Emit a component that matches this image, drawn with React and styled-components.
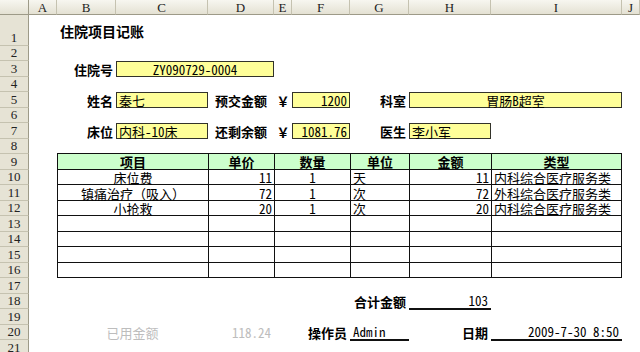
import React from 'react';
import styled, { createGlobalStyle } from 'styled-components';

const Global = createGlobalStyle`
  html, body { margin: 0; padding: 0; background: #fff; }
  body { width: 640px; height: 352px; overflow: hidden; }
`;

const COLS = ['A', 'B', 'C', 'D', 'E', 'F', 'G', 'H', 'I', 'J'];
const col = (l) => COLS.indexOf(l) + 2;
const row = (n) => n + 1;

const Sheet = styled.div`
  display: grid;
  grid-template-columns: 29px 28px 59px 92px 66px 18px 58px 59px 82px 131px 1fr;
  grid-template-rows: 15px 31px repeat(10, 15px 16px);
  width: 640px;
  height: 352px;
  overflow: hidden;
  font-family: "Noto Sans Mono CJK SC", "Noto Sans CJK SC", sans-serif;
  font-size: 13px;
  color: #000;
  background: #fff;
`;

const Corner = styled.div`
  grid-column: 1;
  grid-row: 1;
  background: linear-gradient(#f7f6f0, #e4e1d3);
  border-right: 1px solid #9d9a88;
  border-bottom: 1px solid #9d9a88;
  box-sizing: border-box;
`;

const ColHeader = styled.div`
  grid-column: ${(p) => p.$c};
  grid-row: 1;
  display: flex;
  align-items: center;
  justify-content: center;
  background: linear-gradient(#f7f6f0, #e4e1d3);
  border-right: 1px solid #c5c2b0;
  border-bottom: 1px solid #9d9a88;
  box-sizing: border-box;
  font-family: "Liberation Serif", serif;
  font-size: 13px;
  line-height: 1;
  color: #222;
`;

const RowHeader = styled.div`
  grid-column: 1;
  grid-row: ${(p) => p.$r};
  display: flex;
  align-items: flex-end;
  justify-content: center;
  background: #e6e3d5;
  border-right: 1px solid #9d9a88;
  border-bottom: 1px solid #c5c2b0;
  box-sizing: border-box;
  font-family: "Liberation Serif", serif;
  font-size: 13px;
  line-height: 14px;
  color: #222;
`;

const Cell = styled.div`
  grid-column: ${(p) => p.$c} / span ${(p) => p.$span || 1};
  grid-row: ${(p) => p.$r};
  display: flex;
  align-items: center;
  justify-content: ${(p) =>
    p.$align === 'right' ? 'flex-end' : p.$align === 'center' ? 'center' : 'flex-start'};
  padding: 0 3px;
  box-sizing: border-box;
  white-space: nowrap;
  line-height: 13px;
  min-width: 0;
`;

const Label = styled(Cell)`
  font-family: "Noto Sans CJK SC", sans-serif;
  font-weight: 700;
`;

const Title = styled(Label)`
  font-size: 14px;
  line-height: 14px;
`;

const Field = styled(Cell)`
  background: #ffff99;
  border: 1px solid #33332a;
  padding: 0 2px;
`;

const Muted = styled(Cell)`
  color: #bdbdbd;
`;

const Underlined = styled(Cell)`
  border-bottom: 2px solid #111;
  margin-bottom: -1px;
  align-items: flex-end;
  padding-bottom: 1px;
`;

const Table = styled.div`
  grid-column: ${col('B')} / span 8;
  grid-row: ${row(9)} / span 8;
  display: grid;
  grid-template-columns: 151px 66px 76px 59px 82px 130px;
  grid-template-rows: repeat(4, 16px 15px);
  border-top: 1px solid #111;
  border-left: 1px solid #111;
  box-sizing: border-box;
  margin-top: -1px;
`;

const TCell = styled.div`
  display: flex;
  align-items: ${(p) => (p.$head ? 'center' : 'flex-end')};
  justify-content: ${(p) =>
    p.$align === 'right' ? 'flex-end' : p.$align === 'center' ? 'center' : 'flex-start'};
  padding: 0 2px;
  border-right: 1px solid #111;
  border-bottom: 1px solid #111;
  background: ${(p) => (p.$head ? '#ccffcc' : '#fff')};
  font-family: ${(p) => (p.$head ? '"Noto Sans CJK SC", sans-serif' : 'inherit')};
  font-weight: ${(p) => (p.$head ? 700 : 400)};
  white-space: nowrap;
  line-height: 13px;
  box-sizing: border-box;
  min-width: 0;
`;

const headers = ['项目', '单价', '数量', '单位', '金额', '类型'];
const aligns = ['center', 'right', 'center', 'left', 'right', 'left'];
const items = [
  ['床位费', '11', '1', '天', '11', '内科综合医疗服务类'],
  ['镇痛治疗（吸入）', '72', '1', '次', '72', '外科综合医疗服务类'],
  ['小抢救', '20', '1', '次', '20', '内科综合医疗服务类'],
  ['', '', '', '', '', ''],
  ['', '', '', '', '', ''],
  ['', '', '', '', '', ''],
  ['', '', '', '', '', ''],
];

export default function App() {
  return (
    <>
      <Global />
      <Sheet>
        <Corner />
        {COLS.map((l) => (
          <ColHeader key={l} $c={col(l)}>{l}</ColHeader>
        ))}
        {Array.from({ length: 21 }, (_, i) => (
          <RowHeader key={i} $r={row(i + 1)}>{i + 1}</RowHeader>
        ))}

        <Title $c={col('B')} $span={3} $r={row(1)}>住院项目记账</Title>

        <Label $c={col('B')} $r={row(3)} $align="right">住院号</Label>
        <Field $c={col('C')} $span={2} $r={row(3)} $align="center">ZY090729-0004</Field>

        <Label $c={col('B')} $r={row(5)} $align="right">姓名</Label>
        <Field $c={col('C')} $r={row(5)}>秦七</Field>
        <Label $c={col('D')} $r={row(5)} $align="center">预交金额</Label>
        <Label $c={col('E')} $r={row(5)} $align="center">￥</Label>
        <Field $c={col('F')} $r={row(5)} $align="right">1200</Field>
        <Label $c={col('G')} $r={row(5)} $align="right">科室</Label>
        <Field $c={col('H')} $span={2} $r={row(5)} $align="center">胃肠B超室</Field>

        <Label $c={col('B')} $r={row(7)} $align="right">床位</Label>
        <Field $c={col('C')} $r={row(7)}>内科-10床</Field>
        <Label $c={col('D')} $r={row(7)} $align="center">还剩余额</Label>
        <Label $c={col('E')} $r={row(7)} $align="center">￥</Label>
        <Field $c={col('F')} $r={row(7)} $align="right">1081.76</Field>
        <Label $c={col('G')} $r={row(7)} $align="right">医生</Label>
        <Field $c={col('H')} $r={row(7)}>李小军</Field>

        <Table>
          {headers.map((h) => (
            <TCell key={h} $head $align="center">{h}</TCell>
          ))}
          {items.map((r, ri) =>
            r.map((v, ci) => (
              <TCell key={`${ri}-${ci}`} $align={aligns[ci]}>{v}</TCell>
            ))
          )}
        </Table>

        <Label $c={col('G')} $r={row(18)} $align="right">合计金额</Label>
        <Underlined $c={col('H')} $r={row(18)} $align="right">103</Underlined>

        <Muted $c={col('B')} $span={2} $r={row(20)} $align="center">已用金额</Muted>
        <Muted $c={col('D')} $r={row(20)} $align="right">118.24</Muted>
        <Label $c={col('E')} $span={2} $r={row(20)} $align="right">操作员</Label>
        <Underlined $c={col('G')} $r={row(20)}>Admin</Underlined>
        <Label $c={col('H')} $r={row(20)} $align="right">日期</Label>
        <Underlined $c={col('I')} $r={row(20)} $align="right">2009-7-30 8:50</Underlined>
      </Sheet>
    </>
  );
}
